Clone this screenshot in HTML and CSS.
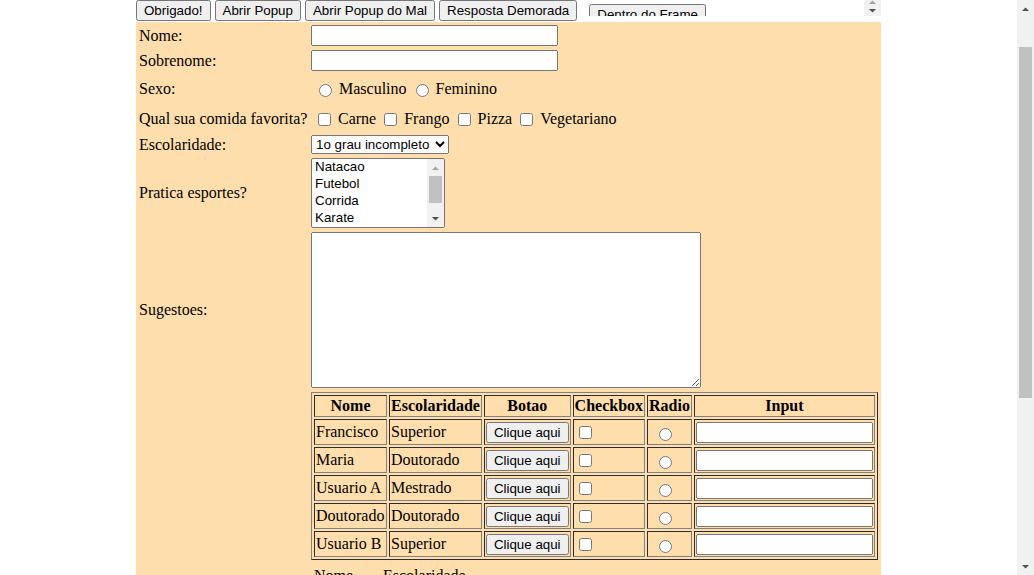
FILE: index.html
```html
<!DOCTYPE html>
<html lang="pt-BR">
<head>
<meta charset="utf-8">
<title>Campo de Treinamento</title>
<link rel="stylesheet" href="styles.css">
</head>
<body>
<div class="screen">
  <div class="viewport">
    <div class="container">
      <div class="toolbar">
        <button type="button" class="btn">Obrigado!</button>
        <button type="button" class="btn">Abrir Popup</button>
        <button type="button" class="btn">Abrir Popup do Mal</button>
        <button type="button" class="btn">Resposta Demorada</button>
        <div class="frame">
          <div class="frame-body"><button type="button" class="btn">Dentro do Frame</button></div>
          <div class="frame-scroll">
            <div class="frame-scroll-up"><svg class="arw" viewBox="0 0 7 4" width="7" height="4" aria-hidden="true"><path d="M0 4 3.5 0.5 7 4Z"/></svg></div>
            <div class="frame-scroll-down"><svg class="arw" viewBox="0 0 7 4" width="7" height="4" aria-hidden="true"><path d="M0 0 3.5 3.5 7 0Z"/></svg></div>
          </div>
        </div>
      </div>

      <form class="form">
        <label class="cell" for="nome">Nome:</label>
        <div class="cell"><input id="nome" class="text" type="text"></div>

        <label class="cell" for="sobrenome">Sobrenome:</label>
        <div class="cell"><input id="sobrenome" class="text" type="text"></div>

        <div class="cell">Sexo:</div>
        <div class="cell">
          <div class="choices choices--radio">
            <label class="choice"><input type="radio" name="sexo"><span class="choice-text">Masculino</span></label>
            <label class="choice"><input type="radio" name="sexo"><span class="choice-text">Feminino</span></label>
          </div>
        </div>

        <div class="cell">Qual sua comida favorita?</div>
        <div class="cell">
          <div class="choices choices--check">
            <label class="choice"><input type="checkbox"><span class="choice-text">Carne</span></label>
            <label class="choice"><input type="checkbox"><span class="choice-text">Frango</span></label>
            <label class="choice"><input type="checkbox"><span class="choice-text">Pizza</span></label>
            <label class="choice"><input type="checkbox"><span class="choice-text">Vegetariano</span></label>
          </div>
        </div>

        <label class="cell" for="escolaridade">Escolaridade:</label>
        <div class="cell">
          <select id="escolaridade" class="select">
            <option>1o grau incompleto</option>
            <option>1o grau completo</option>
            <option>2o grau incompleto</option>
            <option>2o grau completo</option>
            <option>Superior</option>
            <option>Especializacao</option>
            <option>Mestrado</option>
            <option>Doutorado</option>
          </select>
        </div>

        <div class="cell">Pratica esportes?</div>
        <div class="cell">
          <div class="listbox" role="listbox" aria-multiselectable="true">
            <div class="listbox-items">
              <div class="option" role="option">Natacao</div>
              <div class="option" role="option">Futebol</div>
              <div class="option" role="option">Corrida</div>
              <div class="option" role="option">Karate</div>
              <div class="option" role="option">O que eh esporte?</div>
            </div>
            <div class="mini-scroll">
              <div class="sb-btn sb-btn--off"><svg class="arw" viewBox="0 0 7 4" width="7" height="4" aria-hidden="true"><path d="M0 4 3.5 0.5 7 4Z"/></svg></div>
              <div class="sb-track"><div class="sb-thumb sb-thumb--list"></div></div>
              <div class="sb-btn"><svg class="arw" viewBox="0 0 7 4" width="7" height="4" aria-hidden="true"><path d="M0 0 3.5 3.5 7 0Z"/></svg></div>
            </div>
          </div>
        </div>

        <label class="cell" for="sugestoes">Sugestoes:</label>
        <div class="cell"><textarea id="sugestoes" class="textarea"></textarea></div>

        <div class="cell"></div>
        <div class="cell">
          <table class="grid">
            <thead>
              <tr><th class="col-nome">Nome</th><th>Escolaridade</th><th>Botao</th><th>Checkbox</th><th>Radio</th><th>Input</th></tr>
            </thead>
            <tbody>
              <tr><td>Francisco</td><td>Superior</td><td><button type="button" class="btn">Clique aqui</button></td><td><input type="checkbox" class="mark"></td><td class="radio-cell"><input type="radio" name="linha" class="mark"></td><td><input type="text" class="text text--cell"></td></tr>
              <tr><td>Maria</td><td>Doutorado</td><td><button type="button" class="btn">Clique aqui</button></td><td><input type="checkbox" class="mark"></td><td class="radio-cell"><input type="radio" name="linha" class="mark"></td><td><input type="text" class="text text--cell"></td></tr>
              <tr><td>Usuario A</td><td>Mestrado</td><td><button type="button" class="btn">Clique aqui</button></td><td><input type="checkbox" class="mark"></td><td class="radio-cell"><input type="radio" name="linha" class="mark"></td><td><input type="text" class="text text--cell"></td></tr>
              <tr><td>Doutorado</td><td>Doutorado</td><td><button type="button" class="btn">Clique aqui</button></td><td><input type="checkbox" class="mark"></td><td class="radio-cell"><input type="radio" name="linha" class="mark"></td><td><input type="text" class="text text--cell"></td></tr>
              <tr><td>Usuario B</td><td>Superior</td><td><button type="button" class="btn">Clique aqui</button></td><td><input type="checkbox" class="mark"></td><td class="radio-cell"><input type="radio" name="linha" class="mark"></td><td><input type="text" class="text text--cell"></td></tr>
            </tbody>
          </table>
        </div>

        <div class="cell"></div>
        <div class="cell cell--top">
          <div class="sub-head"><span class="sub-col">Nome</span><span>Escolaridade</span></div>
        </div>
      </form>
    </div>
  </div>

  <div class="scrollbar">
    <div class="sb-btn"><svg class="arw" viewBox="0 0 7 4" width="7" height="4" aria-hidden="true"><path d="M0 4 3.5 0.5 7 4Z"/></svg></div>
    <div class="sb-track sb-track--page"><div class="sb-thumb sb-thumb--page"></div></div>
    <div class="sb-btn"><svg class="arw" viewBox="0 0 7 4" width="7" height="4" aria-hidden="true"><path d="M0 0 3.5 3.5 7 0Z"/></svg></div>
  </div>
</div>
</body>
</html>
```

FILE: styles.css
```css
* { box-sizing: border-box; }

html, body {
  margin: 0;
  height: 100%;
  overflow: hidden;
  background: #fff;
}

body {
  font-family: "Liberation Serif", "Times New Roman", serif;
  font-size: 16px;
  color: #000;
}

.screen {
  display: flex;
  height: 100vh;
}

.viewport {
  flex: 1;
  min-width: 0;
  overflow: hidden;
}

.container {
  width: 745px;
  margin: 0 auto;
}

/* top buttons + frame */
.toolbar {
  display: flex;
  align-items: flex-start;
  gap: 4px;
  height: 22px;
}

.btn {
  font: 13.333px "Liberation Sans", Arial, sans-serif;
  height: 21px;
  padding: 1px 6px;
  margin: 0;
  color: #000;
  white-space: nowrap;
}

.frame {
  width: 300px;
  height: 16px;
  display: flex;
  overflow: hidden;
  background: #fff;
}

.frame-body {
  flex: 1;
  padding: 4px 0 0 8px;
}

.frame-scroll {
  width: 17px;
  background: #f1f1f1;
  display: flex;
  flex-direction: column;
  align-items: center;
}

.frame-scroll-up {
  height: 6px;
  color: #a3a3a3;
}

.frame-scroll-down {
  height: 10px;
  padding-top: 3px;
  color: #505050;
}

.arw {
  display: block;
  fill: currentColor;
}

/* form */
.form {
  display: grid;
  grid-template-columns: 170px 1fr;
  gap: 2px;
  padding: 2px;
  background: #ffdead;
  min-height: 553px;
}

.cell {
  padding: 1px;
  display: flex;
  align-items: center;
  min-width: 0;
  white-space: nowrap;
}

.cell--top { align-items: flex-start; }

.text {
  width: 247px;
  height: 21px;
  margin: 0;
  padding: 1px 2px;
  font: 13.333px "Liberation Sans", Arial, sans-serif;
}

.choices {
  display: flex;
  gap: 2px;
  padding: 2px;
}

.choices--radio { height: 28px; }
.choices--check { height: 24px; }

.choice {
  display: flex;
  align-items: center;
  padding: 1px;
}

.choice-text { margin-left: 4px; }

.select {
  width: 138px;
  height: 19px;
  margin: 0;
  font: 13.333px "Liberation Sans", Arial, sans-serif;
  color: #000;
}

/* multi select */
.listbox {
  width: 134px;
  height: 70px;
  display: flex;
  border: 1px solid #767676;
  border-radius: 2px;
  background: #fff;
  overflow: hidden;
  font: 13.333px "Liberation Sans", Arial, sans-serif;
}

.listbox-items {
  flex: 1;
  overflow: hidden;
}

.option {
  line-height: 15px;
  padding: 0 3px 2px;
  white-space: nowrap;
}

.mini-scroll {
  width: 17px;
  background: #f1f1f1;
  display: flex;
  flex-direction: column;
}

.sb-btn {
  height: 17px;
  flex: none;
  display: flex;
  align-items: center;
  justify-content: center;
  color: #505050;
}

.sb-btn--off { color: #a3a3a3; }

.sb-track {
  flex: 1;
  padding: 0 2px;
}

.sb-thumb { background: #c1c1c1; }
.sb-thumb--list { height: 27px; }

.textarea {
  width: 390px;
  height: 156px;
  margin: 0;
  resize: both;
}

/* data table */
.grid {
  border: 1px outset grey;
  border-spacing: 2px;
  border-collapse: separate;
}

.grid th,
.grid td {
  border: 1px inset grey;
  padding: 1px;
  vertical-align: middle;
}

.grid th {
  font-weight: bold;
  text-align: center;
  height: 22px;
}

.grid .col-nome { width: 73px; }

.grid td {
  text-align: left;
  white-space: nowrap;
  height: 26px;
}

.text--cell { width: 177px; }

.mark { vertical-align: middle; }

.grid .radio-cell { padding-left: 6px; }

.sub-head {
  display: flex;
  gap: 4px;
  padding: 3px;
}

.sub-col { width: 65px; }

/* page scrollbar */
.scrollbar {
  width: 17px;
  flex: none;
  background: #f1f1f1;
  display: flex;
  flex-direction: column;
}

.sb-track--page { padding-top: 30px; }
.sb-thumb--page { height: 351px; }
```
